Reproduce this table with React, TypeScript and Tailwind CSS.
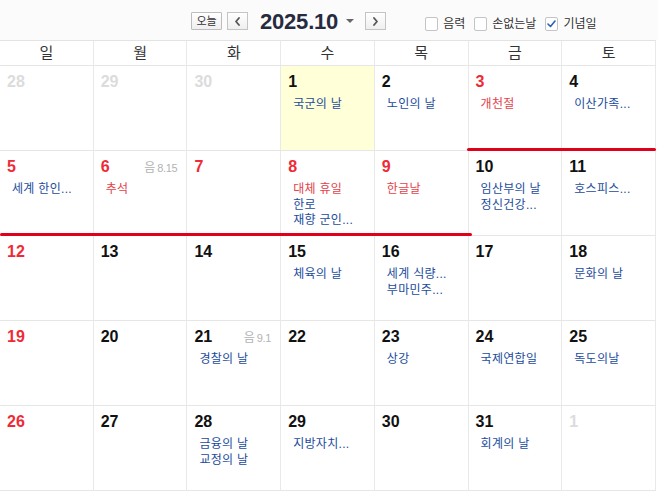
import React from 'react';

type Ev = { text: string; red?: boolean };
type Day = {
  n: number;
  other?: boolean;
  red?: boolean;
  today?: boolean;
  lunar?: string;
  events?: Ev[];
};

const weekdays = ['일', '월', '화', '수', '목', '금', '토'];

const weeks: Day[][] = [
  [
    { n: 28, other: true },
    { n: 29, other: true },
    { n: 30, other: true },
    { n: 1, today: true, events: [{ text: '국군의 날' }] },
    { n: 2, events: [{ text: '노인의 날' }] },
    { n: 3, red: true, events: [{ text: '개천절', red: true }] },
    { n: 4, events: [{ text: '이산가족...' }] },
  ],
  [
    { n: 5, red: true, events: [{ text: '세계 한인...' }] },
    { n: 6, red: true, lunar: '8.15', events: [{ text: '추석', red: true }] },
    { n: 7, red: true },
    { n: 8, red: true, events: [{ text: '대체 휴일', red: true }, { text: '한로' }, { text: '재향 군인...' }] },
    { n: 9, red: true, events: [{ text: '한글날', red: true }] },
    { n: 10, events: [{ text: '임산부의 날' }, { text: '정신건강...' }] },
    { n: 11, events: [{ text: '호스피스...' }] },
  ],
  [
    { n: 12, red: true },
    { n: 13 },
    { n: 14 },
    { n: 15, events: [{ text: '체육의 날' }] },
    { n: 16, events: [{ text: '세계 식량...' }, { text: '부마민주...' }] },
    { n: 17 },
    { n: 18, events: [{ text: '문화의 날' }] },
  ],
  [
    { n: 19, red: true },
    { n: 20 },
    { n: 21, lunar: '9.1', events: [{ text: '경찰의 날' }] },
    { n: 22 },
    { n: 23, events: [{ text: '상강' }] },
    { n: 24, events: [{ text: '국제연합일' }] },
    { n: 25, events: [{ text: '독도의날' }] },
  ],
  [
    { n: 26, red: true },
    { n: 27 },
    { n: 28, events: [{ text: '금융의 날' }, { text: '교정의 날' }] },
    { n: 29, events: [{ text: '지방자치...' }] },
    { n: 30 },
    { n: 31, events: [{ text: '회계의 날' }] },
    { n: 1, other: true },
  ],
];

// holiday period underline (추석 연휴), per week: [startCol, endCol]
const holidaySpans: Record<number, [number, number]> = {
  0: [5, 6],
  1: [0, 4],
};

const TABLE_W = 656;
const COL_W = TABLE_W / 7;

const Chevron = ({ dir }: { dir: 'left' | 'right' }) => (
  <svg width="7" height="9" viewBox="0 0 7 9" fill="none">
    <path
      d={dir === 'left' ? 'M5 1 L2 4.5 L5 8' : 'M2 1 L5 4.5 L2 8'}
      stroke="#555"
      strokeWidth="1.8"
      strokeLinecap="round"
      strokeLinejoin="round"
    />
  </svg>
);

const Checkbox = ({ checked, label }: { checked?: boolean; label: string }) => (
  <label className="flex items-center gap-[5px] mr-[9px]">
    <span className="w-[13px] h-[14px] border border-[#c4c4c4] bg-white rounded-[2px] flex items-center justify-center">
      {checked && (
        <svg width="9" height="8" viewBox="0 0 9 8" fill="none">
          <path d="M1 4 L3.5 6.5 L8 1" stroke="#2b62b8" strokeWidth="1.6" strokeLinecap="round" strokeLinejoin="round" />
        </svg>
      )}
    </span>
    <span className="text-[12px] leading-[14px] text-[#333]">{label}</span>
  </label>
);

const DayCell = ({ d }: { d: Day }) => {
  const numColor = d.other ? 'text-[#dcdcdc]' : d.red ? 'text-[#ef2a36]' : 'text-[#111]';
  return (
    <div className={`border-r border-[#e9e9e9] ${d.today ? 'bg-[#ffffd8]' : ''} pt-[6px] overflow-hidden`}>
      <div className="flex items-baseline justify-between pl-[7px] pr-[9px]">
        <span className={`text-[16px] leading-[20px] font-bold ${numColor}`}>{d.n}</span>
        {d.lunar && (
          <span className="text-[#b3b3b3] flex items-baseline gap-[2px]">
            <span className="text-[12px]">음</span>
            <span className="text-[11px] tracking-[-0.3px]">{d.lunar}</span>
          </span>
        )}
      </div>
      <div className="mt-[5px] pl-[12px] pr-[4px]">
        {d.events?.map((e, i) => (
          <div
            key={i}
            className={`text-[12px] leading-[15.5px] tracking-[0.3px] whitespace-nowrap ${e.red ? 'text-[#e4424b]' : 'text-[#1b4c9c]'}`}
          >
            {e.text}
          </div>
        ))}
      </div>
    </div>
  );
};

export default function App() {
  return (
    <div
      className="w-[658px] h-[493px] bg-white overflow-hidden"
      style={{ fontFamily: '"Liberation Sans", "Noto Sans CJK KR", sans-serif' }}
    >
      {/* toolbar */}
      <div className="h-[40px] bg-[#fbfbfb] flex items-start pt-[12px] pl-[191px]">
        <button className="w-[31px] h-[18px] border border-[#bdbdbd] bg-gradient-to-b from-white to-[#efefef] text-[11px] leading-[16px] text-[#333] rounded-[1px]">
          오늘
        </button>
        <button className="ml-[5px] w-[21px] h-[18px] border border-[#c4c4c4] bg-gradient-to-b from-white to-[#efefef] flex items-center justify-center">
          <Chevron dir="left" />
        </button>
        <span className="ml-[12px] text-[22px] leading-[20px] font-bold text-[#272b40] tracking-[-0.2px]">2025.10</span>
        <span className="ml-[8px] mt-[7px] w-0 h-0 border-l-[4px] border-r-[4px] border-t-[4px] border-l-transparent border-r-transparent border-t-[#666]" />
        <button className="ml-[11px] w-[21px] h-[18px] border border-[#c4c4c4] bg-gradient-to-b from-white to-[#efefef] flex items-center justify-center">
          <Chevron dir="right" />
        </button>
        <div className="ml-[39px] mt-[5px] flex items-center">
          <Checkbox label="음력" />
          <Checkbox label="손없는날" />
          <Checkbox checked label="기념일" />
        </div>
      </div>

      {/* calendar table */}
      <div className="w-[656px] border-t border-[#e3e3e3]">
        <div className="grid grid-cols-7 h-[25px] border-b border-[#e6e6e6] bg-white">
          {weekdays.map((w) => (
            <div key={w} className="border-r border-[#e9e9e9] flex items-center justify-center text-[15px] text-[#333]">
              {w}
            </div>
          ))}
        </div>
        {weeks.map((week, wi) => {
          const span = holidaySpans[wi];
          return (
            <div key={wi} className="relative grid grid-cols-7 h-[85px] border-b border-[#e6e6e6]">
              {week.map((d, di) => (
                <DayCell key={di} d={d} />
              ))}
              {span && (
                <div
                  className="absolute bottom-[-1px] h-[3px] rounded-full bg-[#e1001a] z-10"
                  style={{
                    left: Math.max(0, span[0] * COL_W - 2),
                    width: Math.min(TABLE_W, (span[1] + 1) * COL_W + 3) - Math.max(0, span[0] * COL_W - 2),
                  }}
                />
              )}
            </div>
          );
        })}
      </div>
    </div>
  );
}
